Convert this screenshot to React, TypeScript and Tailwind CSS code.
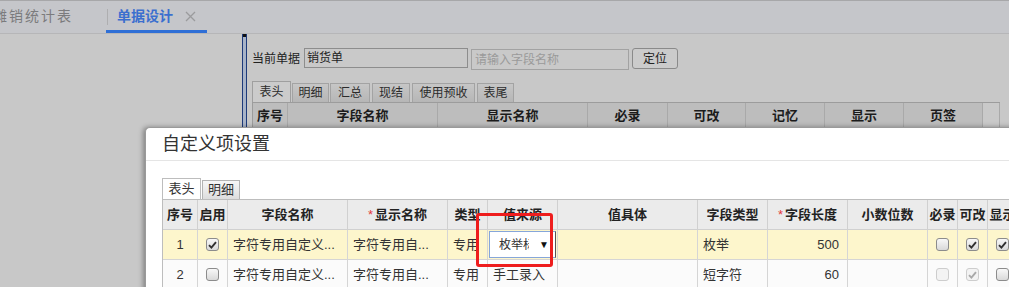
import React from 'react'

function Box({ on, dim }: { on?: boolean; dim?: boolean }) {
  return (
    <span
      className={
        dim
          ? 'flex h-[13px] w-[13px] items-center justify-center rounded-[3px] border border-[#cdcdcd] bg-[#f3f3f3]'
          : 'flex h-[13px] w-[13px] items-center justify-center rounded-[3px] border border-[#8c8c8c] bg-gradient-to-b from-[#f8f8f8] to-[#d9d9d9]'
      }
    >
      {on && (
        <svg width="9" height="8" viewBox="0 0 9 8">
          <path d="M1 4.2 L3.4 6.6 L8 1.2" fill="none" stroke={dim ? '#a9a9a9' : '#303030'} strokeWidth="1.9" />
        </svg>
      )}
    </span>
  )
}

const mainTabs = [
  { t: '表头', c: 'w-[39px] h-[21px] bg-[#cbcbcb] border-[#9f9f9f]' },
  { t: '明细', c: 'ml-[1px] w-[37px] h-[19px] bg-gradient-to-b from-[#c6c6c6] to-[#b6b6b6] border-[#a3a3a3]' },
  { t: '汇总', c: 'ml-[1px] w-[40px] h-[19px] bg-gradient-to-b from-[#c6c6c6] to-[#b6b6b6] border-[#a3a3a3]' },
  { t: '现结', c: 'ml-[2px] w-[38px] h-[19px] bg-gradient-to-b from-[#c6c6c6] to-[#b6b6b6] border-[#a3a3a3]' },
  { t: '使用预收', c: 'ml-[2px] w-[63px] h-[19px] bg-gradient-to-b from-[#c6c6c6] to-[#b6b6b6] border-[#a3a3a3]' },
  { t: '表尾', c: 'ml-[2px] w-[37px] h-[19px] bg-gradient-to-b from-[#c6c6c6] to-[#b6b6b6] border-[#a3a3a3]' },
]

const mainCols = [
  { t: '序号', w: 'w-[35px]' },
  { t: '字段名称', w: 'w-[150px]' },
  { t: '显示名称', w: 'w-[150px]' },
  { t: '必录', w: 'w-[80px]' },
  { t: '可改', w: 'w-[78px]' },
  { t: '记忆', w: 'w-[79px]' },
  { t: '显示', w: 'w-[79px]' },
  { t: '页签', w: 'w-[79px]' },
]

const cell = 'flex items-center overflow-hidden whitespace-nowrap border-r border-b border-[#d5d5d5]'
const head = 'flex items-center justify-center overflow-hidden whitespace-nowrap border-r border-b border-[#d0d0d0] font-bold text-[#222]'
const grid =
  'grid grid-cols-[35px_30px_120px_100px_40px_70px_140px_70px_80px_80px_30px_30px_30px] w-[855px]'

export default function App() {
  return (
    <div className="relative h-[287px] w-[1009px] overflow-hidden bg-[#c8c8c8] font-['Liberation_Sans','Noto_Sans_CJK_SC',sans-serif] text-[12px] text-[#222]">
      {/* page tabs */}
      <div className="flex h-[34px] border-t border-b border-t-[#a7a7a9] border-b-[#b6b6b8] bg-[#c5c6ca]">
        <div className="flex w-[106px] items-center overflow-hidden pb-[1px]">
          <span className="ml-[-7px] whitespace-nowrap text-[14px] tracking-[2px] text-[#7b7b7d]">摊销统计表</span>
        </div>
        <div className="flex w-[101px] items-center border-b-[3px] border-[#2f6fd6] pt-[2px]">
          <span className="ml-[1px] h-[16px] w-px bg-[#aeaeb0]" />
          <span className="ml-[9px] text-[14px] font-bold text-[#3b6fcf]">单据设计</span>
          <svg className="ml-[12px]" width="11" height="11" viewBox="0 0 11 11">
            <path d="M1 1 L10 10 M10 1 L1 10" stroke="#9b9b9d" strokeWidth="1.3" />
          </svg>
        </div>
      </div>

      <div className="flex h-[253px]">
        <div className="w-[242px]" />
        <div className="flex w-[5px] flex-col border-x border-[#1d3a7a] bg-[#a8b3c7]">
          <div className="h-[3px] bg-[#111]" />
        </div>
        <div className="flex-1 pl-[5px] pt-[14px]">
          <div className="flex items-start">
            <span className="mt-[2px] leading-[18px]">当前单据</span>
            <div className="ml-[4px] flex h-[20px] w-[164px] items-center border border-[#8d8d8d] bg-[#c9c9c9] pl-[2px]">销货单</div>
            <div className="ml-[3px] mt-[1px] flex h-[21px] w-[158px] items-center border border-[#a2a2a2] bg-[#c9c9c9] pl-[3px] text-[#9a9a9a]">
              请输入字段名称
            </div>
            <div className="ml-[3px] flex h-[21px] w-[46px] items-center justify-center rounded-[3px] border border-[#8a8a8a] bg-[#cbcbcb]">
              定位
            </div>
          </div>

          <div className="mt-[11px] flex h-[21px] items-end">
            {mainTabs.map((t) => (
              <div key={t.t} className={'flex items-center justify-center border border-b-0 text-[#2b2b2b] ' + t.c}>
                {t.t}
              </div>
            ))}
          </div>

          <div className="flex w-[748px] border-l border-t border-[#9c9c9c]">
            {mainCols.map((c) => (
              <div
                key={c.t}
                className={'flex h-[26px] items-center justify-center border-r border-[#a9a9a9] bg-[#bdbdbd] text-[13px] font-bold text-[#1b1b1b] ' + c.w}
              >
                {c.t}
              </div>
            ))}
            <div className="h-[26px] flex-1 border-r border-[#a9a9a9] bg-[#c9c9c9]" />
          </div>
        </div>
      </div>

      {/* dialog */}
      <div className="absolute left-[145px] top-[127px] h-[200px] w-[900px] rounded-tl-[5px] border-l border-t border-[#9a9a9a] bg-white shadow-[-2px_0_5px_rgba(0,0,0,0.35)]">
        <div className="flex h-[33px] items-center border-b border-[#e5e5e5] pl-[16px] text-[18px] text-[#333]">自定义项设置</div>
        <div className="pl-[16px] pt-[17px] text-[13px] text-[#333]">
          <div className="flex h-[21px] items-end">
            <div className="flex h-[21px] w-[39px] items-center justify-center border border-b-0 border-[#bdbdbd] bg-white">表头</div>
            <div className="ml-[1px] flex h-[19px] w-[38px] items-center justify-center border border-b-0 border-[#b3b3b3] bg-gradient-to-b from-[#f7f7f7] to-[#dddddd]">
              明细
            </div>
          </div>

          <div className={grid + ' border-l border-t border-[#bdbdbd]'}>
            <div className={head + ' h-[30px] bg-[#ebebeb]'}>序号</div>
            <div className={head + ' bg-[#ebebeb]'}>启用</div>
            <div className={head + ' bg-[#ebebeb]'}>字段名称</div>
            <div className={head + ' bg-[#ebebeb]'}>
              <span className="mr-[2px] font-normal text-[#e4393c]">*</span>显示名称
            </div>
            <div className={head + ' bg-[#ebebeb]'}>类型</div>
            <div className={head + ' bg-[#ebebeb]'}>值来源</div>
            <div className={head + ' bg-[#ebebeb]'}>值具体</div>
            <div className={head + ' bg-[#ebebeb]'}>字段类型</div>
            <div className={head + ' bg-[#ebebeb]'}>
              <span className="mr-[2px] font-normal text-[#e4393c]">*</span>字段长度
            </div>
            <div className={head + ' bg-[#ebebeb]'}>小数位数</div>
            <div className={head + ' bg-[#ebebeb]'}>必录</div>
            <div className={head + ' bg-[#ebebeb]'}>可改</div>
            <div className={head + ' bg-[#ebebeb]'}>显示</div>

            <div className={cell + ' h-[30px] justify-center bg-[#fdf6cc]'}>1</div>
            <div className={cell + ' justify-center bg-[#fdf6cc]'}>
              <Box on />
            </div>
            <div className={cell + ' bg-[#fdf6cc] pl-[5px]'}>字符专用自定义...</div>
            <div className={cell + ' bg-[#fdf6cc] pl-[5px]'}>字符专用自...</div>
            <div className={cell + ' bg-[#fdf6cc] pl-[5px]'}>专用</div>
            <div className={cell + ' bg-[#fdf6cc] p-[1px]'}>
              <div className="flex h-[27px] w-full items-center border border-[#86a6da] border-r-[#555] bg-white pl-[9px] text-[12px]">
                <span className="w-[30px] overflow-hidden whitespace-nowrap">枚举标准</span>
                <span className="ml-auto mr-[6px] text-[10px] text-[#111]">▼</span>
              </div>
            </div>
            <div className={cell + ' bg-[#fdf6cc]'} />
            <div className={cell + ' bg-[#fdf6cc] pl-[5px]'}>枚举</div>
            <div className={cell + ' justify-end bg-[#fdf6cc] pr-[8px]'}>500</div>
            <div className={cell + ' bg-[#fdf6cc]'} />
            <div className={cell + ' justify-center bg-[#fdf6cc]'}>
              <Box />
            </div>
            <div className={cell + ' justify-center bg-[#fdf6cc]'}>
              <Box on />
            </div>
            <div className={cell + ' justify-center bg-[#fdf6cc]'}>
              <Box on />
            </div>

            <div className={cell + ' h-[30px] justify-center bg-[#fbfbfb]'}>2</div>
            <div className={cell + ' justify-center bg-[#fbfbfb]'}>
              <Box />
            </div>
            <div className={cell + ' bg-[#fbfbfb] pl-[5px]'}>字符专用自定义...</div>
            <div className={cell + ' bg-[#fbfbfb] pl-[5px]'}>字符专用自...</div>
            <div className={cell + ' bg-[#fbfbfb] pl-[5px]'}>专用</div>
            <div className={cell + ' bg-[#fbfbfb] pl-[5px]'}>手工录入</div>
            <div className={cell + ' bg-[#fbfbfb]'} />
            <div className={cell + ' bg-[#fbfbfb] pl-[5px]'}>短字符</div>
            <div className={cell + ' justify-end bg-[#fbfbfb] pr-[8px]'}>60</div>
            <div className={cell + ' bg-[#fbfbfb]'} />
            <div className={cell + ' justify-center bg-[#fbfbfb]'}>
              <Box dim />
            </div>
            <div className={cell + ' justify-center bg-[#fbfbfb]'}>
              <Box on dim />
            </div>
            <div className={cell + ' justify-center bg-[#fbfbfb]'}>
              <Box />
            </div>
          </div>
        </div>

        {/* annotation box */}
        <div className="absolute left-[330px] top-[85px] h-[54px] w-[77px] rounded-[3px] border-[3px] border-[#ee1d1d]" />
      </div>
    </div>
  )
}
